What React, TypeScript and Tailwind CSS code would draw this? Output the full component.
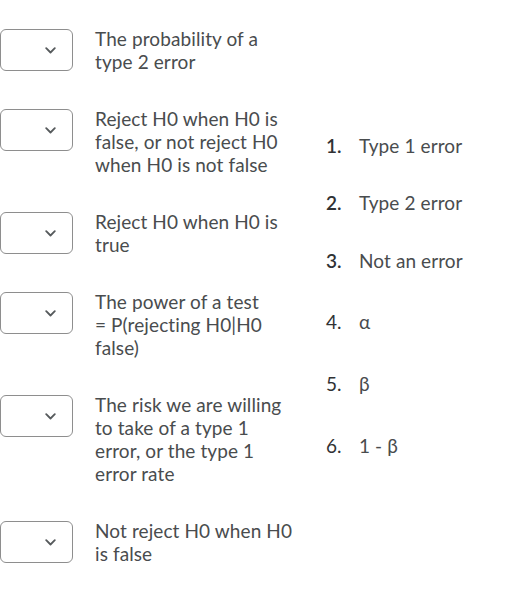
import React from 'react';

const prompts = [
  ['The probability of a', 'type 2 error'],
  ['Reject H0 when H0 is', 'false, or not reject H0', 'when H0 is not false'],
  ['Reject H0 when H0 is', 'true'],
  ['The power of a test', '= P(rejecting H0|H0', 'false)'],
  ['The risk we are willing', 'to take of a type 1', 'error, or the type 1', 'error rate'],
  ['Not reject H0 when H0', 'is false'],
];

const choices = [
  { n: '1.', label: 'Type 1 error', gap: 'mt-0', bold: true },
  { n: '2.', label: 'Type 2 error', gap: 'mt-[34px]', bold: true },
  { n: '3.', label: 'Not an error', gap: 'mt-[35px]', bold: true },
  { n: '4.', label: 'α', gap: 'mt-[38px]', bold: false },
  { n: '5.', label: 'β', gap: 'mt-[39px]', bold: false },
  { n: '6.', label: '1 - β', gap: 'mt-[39px]', bold: false },
];

const SelectBox = () => (
  <div className="mt-[2px] flex h-[42px] w-[73px] shrink-0 items-center justify-end rounded-[6px] border border-[#8e8e8e] bg-white pr-[16px]">
    <svg width="11" height="7" viewBox="0 0 11 7" fill="none">
      <path d="M1.2 1.2 L5.5 5.5 L9.8 1.2" stroke="#565a5c" strokeWidth="1.8" strokeLinecap="round" strokeLinejoin="round" />
    </svg>
  </div>
);

export default function App() {
  return (
    <div
      className="flex h-[594px] w-[526px] bg-white text-[19px] leading-[23px] tracking-[0.1px] text-[#494c4e]"
      style={{ fontFamily: 'Lato, "Noto Sans", sans-serif' }}
    >
      <div className="flex flex-col gap-[34px] pt-[27px]">
        {prompts.map((lines, i) => (
          <div key={i} className="flex items-start gap-[22px]">
            <SelectBox />
            <div className="w-[205px] whitespace-nowrap">
              {lines.map((l, j) => (
                <div key={j}>{l}</div>
              ))}
            </div>
          </div>
        ))}
      </div>
      <ol className="ml-[26px] flex flex-col pt-[134px]">
        {choices.map((c) => (
          <li key={c.n} className={`flex ${c.gap}`}>
            <span className={`w-[33px] text-[#303234] ${c.bold ? 'font-semibold' : ''}`}>{c.n}</span>
            <span>{c.label}</span>
          </li>
        ))}
      </ol>
    </div>
  );
}
